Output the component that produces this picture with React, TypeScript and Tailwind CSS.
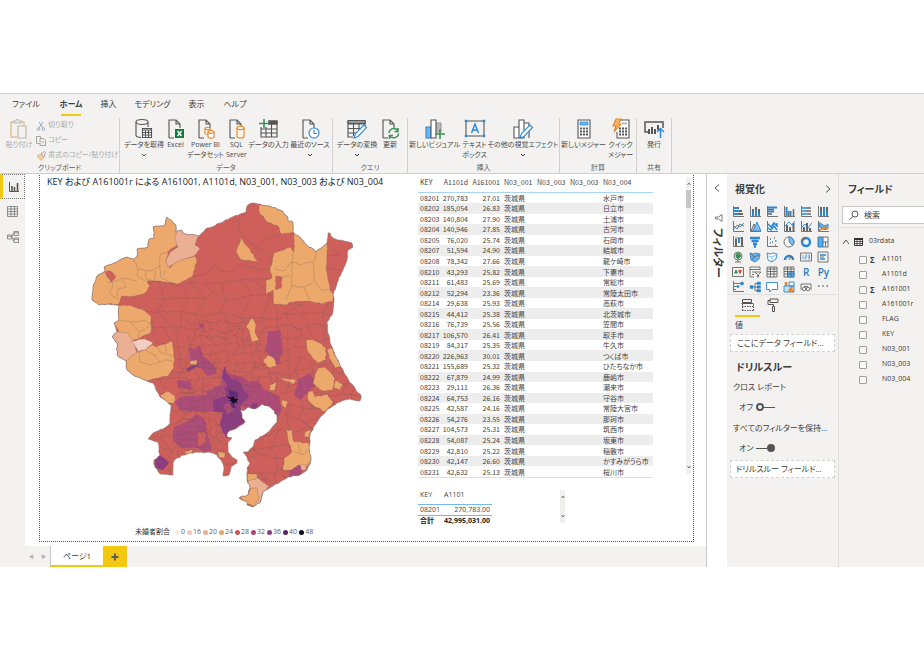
import type { ReactNode } from "react"

const FONT = "font-['Open_Sans','Noto_Sans_CJK_JP',sans-serif] [font-feature-settings:'palt']"

/* ---------- ribbon ---------- */

const INK = "#555"
const BLUE = "#2b88d8"
const GREEN = "#3a9155"
const ORANGE = "#e58326"

function Glyph({ children }: { children: ReactNode }) {
  return (
    <svg viewBox="0 0 22 22" className="size-[22px] shrink-0" fill="none" stroke={INK} strokeWidth="1.1" aria-hidden="true">
      {children}
    </svg>
  )
}

const page = <path d="M4 20V2h7l4 4v4M11 2v4h4M4 20h5" />

const glyphs: Record<string, ReactNode> = {
  paste: (
    <g stroke="#b9b5b0">
      <path d="M6 4H3v15h6M13 4h3v4" stroke="#dfc08c" strokeWidth="1.4" />
      <path d="M6 5V3h2c0-2 3-2 3 0h2v2zM10 8h8v12h-8z" fill="#f3f2f1" />
    </g>
  ),
  database: (
    <>
      <ellipse cx="9" cy="4" rx="6" ry="2.5" />
      <path d="M3 4v13c0 1.500 2 2.500 5 2.500M15 4v5" />
      <path d="M9.500 10.500h9v9h-9z" fill="#fff" />
      <path d="M9.500 12h9M9.500 14.500h9M9.500 17h9M12.500 12v7.500M15.500 12v7.500" />
    </>
  ),
  excel: (
    <>
      {page}
      <path d="M10 11h9v9h-9z" fill="#107c41" stroke="none" />
      <path d="M12.500 13l4 5M16.500 13l-4 5" stroke="#fff" strokeWidth="1.4" />
    </>
  ),
  dataset: (
    <>
      {page}
      <g stroke={ORANGE} fill="#fff">
        <path d="M10 10.500v5c0 1 4 1 5 0v-5" />
        <ellipse cx="12.5" cy="10.5" rx="2.5" ry="1.2" />
        <path d="M13 14v5c0 1.500 6 1.500 6 0v-5" />
        <ellipse cx="16" cy="14" rx="3" ry="1.4" />
      </g>
    </>
  ),
  sql: (
    <>
      {page}
      <g stroke={ORANGE} fill="#fdf3e8">
        <path d="M11 10v8.500c0 2 7 2 7 0V10" />
        <ellipse cx="14.5" cy="10" rx="3.5" ry="1.7" />
      </g>
    </>
  ),
  enter: (
    <>
      <path d="M10 3h9v16H3V9M10 6h9M3 11h16M3 15h16M8 9v10M13.500 6v13" />
      <path d="M11 3h8v3h-8z" fill={INK} />
      <path d="M6 1v9M1 5.500h10" stroke={GREEN} strokeWidth="1.6" />
    </>
  ),
  recent: (
    <>
      {page}
      <circle cx="15" cy="15" r="5" stroke={BLUE} fill="#fff" />
      <path d="M15 12v3.500h3" stroke={BLUE} />
    </>
  ),
  transform: (
    <>
      <path d="M2 3h17v5M2 3v16h5M2 6h17M2 10.500h14M2 15h8M7.500 6v12M13 6v7" />
      <path d="M2 2.500h17v3H2z" fill="#999" />
      <path d="M8 20l1.500-4.500L18 7l2.500 2.500L12 18.500z" stroke={BLUE} fill="#fff" />
    </>
  ),
  refresh: (
    <>
      {page}
      <path d="M10 15c.5-5 7-6 9-2M19 10v3.500h-3.500M19.500 15.500c-.5 5-7 5.500-9 2M10.500 21v-3.500H14" stroke={GREEN} strokeWidth="1.5" />
    </>
  ),
  visual: (
    <>
      <path d="M2 9h5v11H2z" fill="#6cb4ee" stroke={BLUE} />
      <path d="M12 5h5v9h-5z" fill="#bbb" stroke="#999" />
      <path d="M7 2h5v18H7z" fill="#fff" />
      <path d="M16 11v10M11 16h10" stroke={GREEN} strokeWidth="1.5" />
    </>
  ),
  textbox: (
    <>
      <path d="M2 3h18v15H2z" />
      <path d="M1 2h2v2H1zM19 2h2v2h-2zM1 17h2v2H1zM19 17h2v2h-2z" fill={BLUE} stroke={BLUE} strokeWidth=".5" />
      <path d="M7.500 15L11 6l3.500 9M8.700 12h4.600" stroke={BLUE} strokeWidth="1.4" />
    </>
  ),
  more: (
    <>
      <path d="M2 9h5v11H2zM7 2h5v18H7zM12 5h5v15" fill="#fff" />
      <path d="M8 20l1.500-4.500L18 7l2.500 2.500L12 18.500z" stroke={BLUE} fill="#fff" />
    </>
  ),
  calc: (
    <>
      <path d="M5 2h12v18H5z" fill="#fff" />
      <path d="M7 4h8v3H7z" fill="#6cb4ee" stroke={BLUE} strokeWidth=".8" />
      <path d="M7 10.500h8M7 13.500h8M7 16.500h8" strokeWidth="1.8" strokeDasharray="2 1" />
    </>
  ),
  quick: (
    <>
      <path d="M8 2h11v18H7v-6" fill="#fff" />
      <path d="M12 4.500h5v2h-5z" fill="#bbb" stroke="none" />
      <path d="M9 10.500h8M9 13.500h8M9 16.500h8" strokeWidth="1.8" strokeDasharray="2 1" />
      <path d="M6 1h5L8.500 6H11l-7 8 2-6H3z" fill="#f8b26a" stroke={ORANGE} />
    </>
  ),
  publish: (
    <>
      <path d="M5 14H2V4h18v6" strokeWidth="1.5" />
      <path d="M6 11v5M9 9v7M12 11v5M15 7v5" strokeWidth="2" />
      <path d="M17.500 20v-9M14 14l3.500-3.500L21 14" stroke={BLUE} strokeWidth="1.5" />
    </>
  ),
}

function Caret() {
  return (
    <svg viewBox="0 0 6 4" className="mt-[3px] h-[4px] w-[6px]" fill="none" stroke="#444" aria-hidden="true">
      <path d="M1 1l2 2 2-2" />
    </svg>
  )
}

interface Command {
  icon: string
  lines: string[]
  width: string
  menu?: boolean
  off?: boolean
}

function CommandButton({ icon, lines, width, menu, off }: Command) {
  return (
    <button
      disabled={off}
      className={`${width} flex shrink-0 flex-col items-center whitespace-nowrap text-[7px] leading-[10px] ${off ? "text-[#aaa8a6]" : "text-[#4b4a49]"}`}
    >
      <Glyph>{glyphs[icon]}</Glyph>
      {lines.map((line) => (
        <span key={line}>{line}</span>
      ))}
      {menu && <Caret />}
    </button>
  )
}

function Group({ name, width, children }: { name: string; width: string; children: ReactNode }) {
  return (
    <section aria-label={name} className={`${width} flex shrink-0 flex-col border-r border-[#d2d0ce]`}>
      <div className="flex flex-1 items-start">{children}</div>
      <div className="text-center text-[7px] leading-[10px] text-[#605e5c]">{name}</div>
    </section>
  )
}

const tabs = [
  { name: "ファイル", width: "w-[24px]" },
  { name: "ホーム", width: "w-[20px]" },
  { name: "挿入", width: "w-[17px]" },
  { name: "モデリング", width: "w-[33px]" },
  { name: "表示", width: "w-[17px]" },
  { name: "ヘルプ", width: "w-[22px]" },
]

function Ribbon() {
  return (
    <header className="border-y border-[#d2d0ce] bg-[#f3f2f1] text-[#3b3a39]">
      <nav className="flex h-[22px] gap-[19px] pl-[14px]">
        {tabs.map((tab) => (
          <button
            key={tab.name}
            className={`${tab.width} flex justify-center whitespace-nowrap border-b-2 pt-[4px] text-[8px] leading-[12px] first:mr-[4px] ${tab.name === "ホーム" ? "border-[#f2c811] font-bold" : "border-transparent"}`}
          >
            {tab.name}
          </button>
        ))}
      </nav>
      <div className="flex h-[57px] pt-[2px]">
        <Group name="クリップボード" width="w-[120px]">
          <div className="flex pl-[5px]">
            <CommandButton icon="paste" lines={["貼り付け"]} width="w-[28px]" off />
            <div className="flex flex-col pl-[3px] text-[7px] text-[#aaa8a6]">
              <button disabled className="flex h-[15px] items-center gap-[2px] whitespace-nowrap">
                <svg viewBox="0 0 10 10" className="size-[10px]" fill="none" stroke="#9bafc4" aria-hidden="true">
                  <path d="M3 1l4 6M7 1L3 7" />
                  <circle cx="2.5" cy="8" r="1.3" />
                  <circle cx="7.5" cy="8" r="1.3" />
                </svg>
                切り取り
              </button>
              <button disabled className="flex h-[15px] items-center gap-[2px] whitespace-nowrap">
                <svg viewBox="0 0 10 10" className="size-[10px]" fill="none" stroke="#a6a4a2" aria-hidden="true">
                  <path d="M3.500 7.500H.5v-7h4v2M4 2.500h3.500l2 2v5H4zM5.500 6h2.500" />
                </svg>
                コピー
              </button>
              <button disabled className="flex h-[15px] items-center gap-[2px] whitespace-nowrap">
                <svg viewBox="0 0 10 10" className="size-[10px]" fill="none" stroke="#a6a4a2" aria-hidden="true">
                  <path d="M1 5l4-2 3 3-3 3.500z" fill="#f2cfa4" stroke="#e0b37e" />
                  <path d="M5 3l3.500-2.500 1 1L8 6z" />
                </svg>
                書式のコピー/貼り付け
              </button>
            </div>
          </div>
        </Group>
        <Group name="データ" width="w-[213px]">
          <div className="flex pl-[3px]">
            <CommandButton icon="database" lines={["データを取得"]} width="w-[42px]" menu />
            <CommandButton icon="excel" lines={["Excel"]} width="w-[21px]" />
            <CommandButton icon="dataset" lines={["Power BI", "データセット"]} width="w-[39px]" />
            <CommandButton icon="sql" lines={["SQL", "Server"]} width="w-[23px]" />
            <CommandButton icon="enter" lines={["データの入力"]} width="w-[41px]" />
            <CommandButton icon="recent" lines={["最近のソース"]} width="w-[42px]" menu />
          </div>
        </Group>
        <Group name="クエリ" width="w-[75px]">
          <div className="flex pl-[1px]">
            <CommandButton icon="transform" lines={["データの変換"]} width="w-[46px]" menu />
            <CommandButton icon="refresh" lines={["更新"]} width="w-[20px]" />
          </div>
        </Group>
        <Group name="挿入" width="w-[152px]">
          <div className="flex">
            <CommandButton icon="visual" lines={["新しいビジュアル"]} width="w-[53px]" />
            <CommandButton icon="textbox" lines={["テキスト", "ボックス"]} width="w-[27px]" />
            <CommandButton icon="more" lines={["その他の視覚エフェクト"]} width="w-[70px]" menu />
          </div>
        </Group>
        <Group name="計算" width="w-[77px]">
          <div className="flex">
            <CommandButton icon="calc" lines={["新しいメジャー"]} width="w-[47px]" />
            <CommandButton icon="quick" lines={["クイック", "メジャー"]} width="w-[27px]" />
          </div>
        </Group>
        <Group name="共有" width="w-[35px]">
          <CommandButton icon="publish" lines={["発行"]} width="w-[34px]" />
        </Group>
      </div>
    </header>
  )
}

/* ---------- map ---------- */

type Point = [number, number]

const RED = "#cf5f5b"
const AMBER = "#eda96c"
const PINK = "#ebaf93"
const PALE = "#f2cdc1"
const MAUVE = "#ae4b77"
const PURPLE = "#8d3c82"

const coast =
  "104,267 112,264 127,257 134,259 137,256 137,249 148,247 149,239 154,238 153,227 164,226 167,217 176,225 176,231 182,230 183,233 199,236 207,228 223,222 230,218 246,212 247,206 252,203 260,204 270,206 280,210 288,217 288,221 293,222 293,232 300,237 307,245 316,252 327,243 328,233 330,233 333,238 352,243 353,247 348,250 346,263 343,270 337,283 333,295 334,301 333,312 327,322 328,333 331,345 335,355 341,367 347,377 357,392 361,395 360,401 350,399 340,402 328,409 317,422 310,435 309,447 311,460 307,470 300,475 288,477 273,486 263,492 260,503 253,507 247,505 247,502 239,498 240,497 248,495 250,488 247,480 247,468 250,463 247,457 243,452 247,452 253,447 255,440 267,433 277,422 277,415 270,407 262,404 255,409 248,407 243,411 241,409 242,418 245,422 237,428 228,432 227,437 232,438 228,442 228,452 232,457 237,460 237,463 231,467 229,475 223,476 224,468 222,462 217,455 208,452 190,453 177,458 173,463 173,475 160,474 155,467 154,460 160,455 158,442 148,439 153,433 163,429 170,423 171,405 160,397 153,383 147,381 133,375 127,370 126,361 117,355 117,343 112,337 117,332 114,323 119,320 119,305 108,304 99,305 92,300 93,287 98,275 105,271"

const urban: [string, string][] = [
  [MAUVE, "268,332 280,330 283,350 278,365 272,362 266,350"],
  [MAUVE, "298,380 310,373 316,384 310,390 300,400 294,395"],
  [MAUVE, "288,478 290,470 296,462 301,468 303,475"],
  [MAUVE, "174,427 188,421 197,414 206,422 208,437 212,450 205,452 197,448 180,447 173,440"],
  [RED, "198,432 205,432 206,442 198,446"],
  [MAUVE, "175,402 180,397 213,394 216,412 200,412 180,410"],
  [MAUVE, "177,381 190,381 192,390 178,388"],
  [MAUVE, "189,347 194,350 199,345 203,356 215,366 217,374 208,376 200,368 190,364"],
  [MAUVE, "222,370 232,375 240,376 250,382 258,380 264,390 280,396 281,412 276,420 272,408 262,406 255,411 240,406 215,402 206,396 206,391 222,385"],
  [PURPLE, "213,400 226,396 224,388 228,386 222,378 224,366 230,378 240,382 244,390 249,397 243,402 240,406 243,412 246,421 232,430 232,438 226,438 220,426 223,412 214,412"],
  [MAUVE, "223,405 231,402 234,410 227,415"],
  [PURPLE, "186,369 195,364 198,366 188,372"],
  [PURPLE, "154,457 160,455 169,463 163,470 156,468"],
  [PURPLE, "252,404 258,403 256,411 251,410"],
  ["#5f2a72", "228,389 237,392 238,398 230,398"],
  ["#5f2a72", "230,402 234,402 236,408 232,408"],
  [MAUVE, "199,324 203,323 204,327 200,329"],
]

const rural: [string, string][] = [
  [AMBER, "104,267 112,264 127,257 134,259 137,256 137,249 148,247 149,239 154,238 153,227 164,226 167,217 176,225 176,231 177,245 168,252 166,262 170,268 175,262 185,258 195,256 197,260 192,277 186,280 177,284 160,281 147,281 150,286 145,293 135,296 122,296 119,304 108,304 99,305 92,300 93,287 98,275 105,271"],
  [PINK, "176,231 182,230 183,233 199,236 195,245 200,249 194,256 176,262 168,268 166,260 170,252 178,247 175,240"],
  [RED, "105,272 110,271 116,277 111,282 107,277"],
  [AMBER, "119,305 130,305 145,311 151,316 151,332 140,338 132,341 119,332 114,323 119,320"],
  [PINK, "117,332 128,333 134,342 137,352 128,361 126,361 117,355 117,343 112,337"],
  [PALE, "132,341 145,339 153,343 145,350 138,352 134,344"],
  [AMBER, "137,352 145,350 153,345 156,347 165,344 172,341 174,352 174,368 168,376 153,379 147,381 133,375 127,370 126,361"],
  [AMBER, "160,395 168,391 175,396 174,403 166,402"],
  [AMBER, "260,204 270,206 280,210 288,217 288,221 293,222 293,232 281,234 279,227 266,221 259,212"],
  [AMBER, "294,232 300,237 307,245 316,252 327,243 327,255 326,268 330,290 333,294 333,301 322,304 310,301 290,302 286,305 274,304 273,290 266,294 266,280 272,278 270,268 274,253 284,250 290,247 294,252"],
  [RED, "276,276 282,277 281,288 276,290"],
  [AMBER, "241,238 248,247 258,262 242,260 236,252 238,246"],
  [AMBER, "252,318 256,325 255,332 259,340 252,342 249,330 246,327"],
  [AMBER, "268,355 274,358 277,366 270,368 263,362"],
  [AMBER, "306,340 314,340 326,348 326,360 318,363 308,352"],
  [AMBER, "327,350 332,348 341,367 335,368 329,358"],
  [AMBER, "318,368 325,367 335,378 333,390 323,391 313,383"],
  [AMBER, "335,380 343,384 340,390 334,388"],
  [AMBER, "308,392 313,391 315,397 327,394 333,402 325,412 312,404 308,400"],
  [AMBER, "280,377 296,380 294,384 283,380"],
  [AMBER, "270,385 276,382 275,390 269,390"],
  [AMBER, "282,400 288,402 286,408 282,405"],
  [AMBER, "286,430 292,430 294,442 309,443 311,460 306,467 298,465 292,470 283,470 284,458 292,452 288,440"],
  [AMBER, "305,432 311,430 309,437 304,436"],
  [PINK, "300,465 306,465 306,470 301,470"],
  [AMBER, "247,473 257,474 258,479 248,481"],
  [PINK, "248,481 258,478 269,486 262,494 259,504 252,507 258,498 256,490 250,488"],
  [AMBER, "240,497 248,495 250,489 257,488 259,500 253,506 247,504"],
  [AMBER, "190,361 197,360 196,365 190,364"],
  [AMBER, "185,451 193,450 191,454 186,454"],
  [AMBER, "218,452 225,453 224,458 219,458"],
]

// municipal borders too large for the generated mesh
const borders = [
  "134,259 138,269 150,271 160,266 160,255 168,252",
  "138,269 137,276 145,281",
  "145,271 146,279 155,281 155,271",
  "160,266 161,278 174,284",
  "163,276 166,270",
  "107,282 113,282 122,278 137,281",
  "113,282 110,294 119,300",
  "122,278 126,287 118,289 117,297",
  "119,320 132,322 145,320 151,325",
  "130,322 139,332 150,326",
  "139,332 138,338",
  "139,352 140,362 150,365 160,362 155,355 145,350",
  "156,347 160,352 172,356",
  "165,344 166,353",
  "160,362 168,360 174,362",
  "274,268 283,271 292,262 294,252",
  "292,262 302,265 315,260 316,252",
  "292,262 292,285 286,300",
  "313,262 314,280 321,290 330,290",
  "292,286 304,287 313,282",
  "304,287 310,300",
  "282,277 290,275",
  "294,451 303,455 310,448",
  "298,442 301,452",
  "247,206 246,212 239,219 238,231 247,240 257,246",
  "257,246 266,252 272,262",
  "257,246 268,238 281,234",
  "248,240 262,255",
  "192,277 205,275 215,264 220,272 232,271 243,265 262,270 270,268",
  "327,255 340,256 346,263",
  "328,243 340,256",
  "326,268 343,270",
]

function noise(x: number, y: number) {
  const v = Math.sin(x * 12.9898 + y * 78.233) * 43758.5453
  return v - Math.floor(v)
}

// breaks every segment into short steps, so that a border looks surveyed
function roughen(points: Point[], amount = 1.4) {
  const out: Point[] = [points[0]]
  for (let i = 1; i < points.length; i++) {
    const [ax, ay] = points[i - 1]
    const [bx, by] = points[i]
    const length = Math.hypot(bx - ax, by - ay)
    const steps = Math.max(1, Math.round(length / 3))
    for (let s = 1; s < steps; s++) {
      const x = ax + ((bx - ax) * s) / steps
      const y = ay + ((by - ay) * s) / steps
      out.push([x + (noise(x, y) - 0.5) * amount, y + (noise(y, x) - 0.5) * amount])
    }
    out.push([bx, by])
  }
  return out
}

const toPath = (points: Point[]) => "M" + points.map(([x, y]) => `${x.toFixed(1)} ${y.toFixed(1)}`).join("L")

const parse = (text: string) => text.split(" ").map((pair) => pair.split(",").map(Number) as Point)

const area = (text: string) => {
  const points = parse(text)
  return toPath(roughen([...points, points[0]])) + "Z"
}

function mesh(x0: number, y0: number, x1: number, y1: number, size: number) {
  const at = (i: number, j: number): Point => [
    x0 + (i + (j % 2) / 2 + (noise(i + x0, j + y0) - 0.5) * 0.8) * size,
    y0 + (j + (noise(j + y0, i + x0) - 0.5) * 0.8) * size,
  ]
  let d = ""
  for (let j = 0; j * size <= y1 - y0; j++) {
    for (let i = 0; i * size <= x1 - x0; i++) {
      d += toPath(roughen([at(i, j), at(i + 1, j)], 2))
      if (noise(i * 3, j * 7) > 0.15) d += toPath(roughen([at(i, j), at(i, j + 1)], 2))
    }
  }
  return d
}

const meshes = [
  mesh(145, 282, 355, 325, 16),
  mesh(150, 330, 185, 475, 13),
  mesh(185, 322, 262, 392, 8),
  mesh(180, 392, 250, 450, 7),
  mesh(264, 328, 360, 412, 11),
  mesh(245, 418, 312, 485, 13),
  mesh(220, 452, 236, 476, 11),
]

function RegionMap() {
  return (
    <svg viewBox="80 195 290 320" className="ml-[40px] h-[320px] w-[290px]" role="img" aria-label="未婚者割合">
      <defs>
        <clipPath id="land">
          <path d={area(coast)} />
        </clipPath>
      </defs>
      <path d={area(coast)} fill={RED} />
      <g clipPath="url(#land)" stroke="#6c5f5a" strokeOpacity=".55" strokeWidth=".5" strokeLinejoin="round">
        {urban.map(([fill, points]) => (
          <path key={points} d={area(points)} fill={fill} stroke="none" />
        ))}
        {meshes.map((d) => (
          <path key={d.slice(0, 24)} d={d} fill="none" />
        ))}
        {rural.map(([fill, points]) => (
          <path key={points} d={area(points)} fill={fill} />
        ))}
        {borders.map((points) => (
          <path key={points} d={toPath(roughen(parse(points)))} fill="none" />
        ))}
      </g>
      <path d="M226 396l5 1.500 3-1 .5 2 4 .5-2 2 1 2-3-.5-1 1.500-1.500-2.500-3-1 2-1z" fill="#140a20" />
      <path d={area(coast)} fill="none" stroke="#8a7a74" strokeWidth=".6" />
    </svg>
  )
}

const legend = [
  { value: "0", dot: "bg-[#f8ebe9]" },
  { value: "16", dot: "bg-[#f0c8bb]" },
  { value: "20", dot: "bg-[#ebaf93]" },
  { value: "24", dot: "bg-[#eda360]" },
  { value: "28", dot: "bg-[#cf5551]" },
  { value: "32", dot: "bg-[#ae4270]" },
  { value: "36", dot: "bg-[#8d3c82]" },
  { value: "40", dot: "bg-[#56246c]" },
  { value: "48", dot: "bg-[#140a20]" },
]

/* ---------- tables ---------- */

const cities = [
  ["08201", "270,783", "27.01", "水戸市"],
  ["08202", "185,054", "26.83", "日立市"],
  ["08203", "140,804", "27.90", "土浦市"],
  ["08204", "140,946", "27.85", "古河市"],
  ["08205", "76,020", "25.74", "石岡市"],
  ["08207", "51,594", "24.90", "結城市"],
  ["08208", "78,342", "27.66", "龍ケ崎市"],
  ["08210", "43,293", "25.82", "下妻市"],
  ["08211", "61,483", "25.69", "常総市"],
  ["08212", "52,294", "23.36", "常陸太田市"],
  ["08214", "29,638", "25.93", "高萩市"],
  ["08215", "44,412", "25.38", "北茨城市"],
  ["08216", "76,739", "25.56", "笠間市"],
  ["08217", "106,570", "26.41", "取手市"],
  ["08219", "84,317", "25.35", "牛久市"],
  ["08220", "226,963", "30.01", "つくば市"],
  ["08221", "155,689", "25.32", "ひたちなか市"],
  ["08222", "67,879", "24.99", "鹿嶋市"],
  ["08223", "29,111", "26.36", "潮来市"],
  ["08224", "64,753", "26.16", "守谷市"],
  ["08225", "42,587", "24.16", "常陸大宮市"],
  ["08226", "54,276", "23.55", "那珂市"],
  ["08227", "104,573", "25.31", "筑西市"],
  ["08228", "54,087", "25.24", "坂東市"],
  ["08229", "42,810", "25.22", "稲敷市"],
  ["08230", "42,147", "26.60", "かすみがうら市"],
  ["08231", "42,632", "25.13", "桜川市"],
]

function ScrollBar({ height, thumb }: { height: string; thumb?: boolean }) {
  return (
    <div className={`${height} flex w-[5px] flex-col items-center bg-[#f1f0ef] py-[3px]`}>
      <svg viewBox="0 0 4 8" className="h-[8px] w-[4px]" fill="none" stroke="#555" strokeWidth=".8" aria-hidden="true">
        <path d="M.5 5L2 3l1.500 2" />
      </svg>
      {thumb && <div className="mt-[2px] h-[18px] w-full bg-[#c8c6c4]" />}
      <svg viewBox="0 0 4 8" className="mt-auto h-[8px] w-[4px]" fill="none" stroke="#555" strokeWidth=".8" aria-hidden="true">
        <path d="M.5 3L2 5l1.500-2" />
      </svg>
    </div>
  )
}

function CityTable() {
  return (
    <table className="h-[301px] w-[235px] table-fixed border-b border-[#e1dfdd] text-left font-['Noto_Sans_CJK_JP',sans-serif] text-[7px] leading-[10px] whitespace-nowrap text-[#444]">
      <colgroup>
        <col className="w-[22px]" />
        <col className="w-[30px]" />
        <col className="w-[32px]" />
        <col className="w-[33px]" />
        <col className="w-[33px]" />
        <col className="w-[33px]" />
        <col className="w-[52px]" />
      </colgroup>
      <thead>
        <tr className="h-[15px] border-b border-[#a9d5f2] align-top">
          {["KEY", "A1101d", "A161001", "N03_001", "N03_003", "N03_003", "N03_004"].map((name, i) => (
            <th key={i} className={`px-[2px] py-0 font-normal ${i === 1 || i === 2 ? "text-right" : ""}`}>
              {name}
            </th>
          ))}
        </tr>
      </thead>
      <tbody>
        {cities.map(([key, people, rate, city]) => (
          <tr key={key} className="even:bg-[#ededed]">
            <td className="px-[2px] py-0">{key}</td>
            <td className="px-[2px] py-0 text-right">{people}</td>
            <td className="px-[2px] py-0 text-right">{rate}</td>
            <td className="px-[2px] py-0">茨城県</td>
            <td />
            <td />
            <td className="px-[2px] py-0">{city}</td>
          </tr>
        ))}
      </tbody>
    </table>
  )
}

function TotalTable() {
  return (
    <table className="w-[74px] table-fixed text-left text-[7px] leading-[10px] whitespace-nowrap text-[#444]">
      <colgroup>
        <col className="w-[24px]" />
        <col className="w-[50px]" />
      </colgroup>
      <thead>
        <tr className="h-[14px] border-b border-[#74baee] align-top">
          <th className="px-[2px] py-0 font-normal">KEY</th>
          <th className="px-[2px] py-0 font-normal">A1101</th>
        </tr>
      </thead>
      <tbody>
        <tr className="h-[11px] border-b border-[#74baee]">
          <td className="px-[2px] py-0">08201</td>
          <td className="px-[2px] py-0 text-right">270,783.00</td>
        </tr>
      </tbody>
      <tfoot>
        <tr className="h-[11px] font-bold text-[#222]">
          <td className="px-[2px] py-0">合計</td>
          <td className="px-[2px] py-0 text-right">42,995,031.00</td>
        </tr>
      </tfoot>
    </table>
  )
}

/* ---------- side panes ---------- */

const axes = <path d="M1.500 0v10.500H12" />

const visuals: { name: string; art: ReactNode }[] = [
  { name: "積み上げ横棒", art: <>{axes}<path d="M2 2h4M2 5h6M2 8h5" stroke={BLUE} strokeWidth="2" /><path d="M6 2h1M8 5h2M6 8h5" strokeWidth="2" /></> },
  { name: "積み上げ縦棒", art: <>{axes}<path d="M4 10V6M7 10V4M10 10V7" stroke={BLUE} strokeWidth="2" /><path d="M4 6V3M7 4V1M10 7V3" strokeWidth="2" /></> },
  { name: "集合横棒", art: <>{axes}<path d="M2 1.500h9M2 5.500h6" stroke={BLUE} strokeWidth="2" /><path d="M2 3.500h6M2 8h4" strokeWidth="1.5" /></> },
  { name: "集合縦棒", art: <>{axes}<path d="M3.500 10V1M7.500 10V5" stroke={BLUE} strokeWidth="2" /><path d="M5.500 10V5M10.500 10V3" strokeWidth="1.5" /></> },
  { name: "100% 横棒", art: <>{axes}<path d="M2 2h5M2 5h3M2 8h6" stroke={BLUE} strokeWidth="1.5" /><path d="M7 2h4M5 5h6M8 8h3" strokeWidth="1.5" /></> },
  { name: "100% 縦棒", art: <>{axes}<path d="M4 10V5M7 10V2M10 10V6" stroke={BLUE} strokeWidth="2" /><path d="M4 5V1M7 2V1M10 6V1" strokeWidth="2" /></> },
  { name: "折れ線", art: <>{axes}<path d="M2 8l3-4 3 2 4-4" stroke={BLUE} /><path d="M2 5l3 3 3-5 4 2" /></> },
  { name: "面", art: <>{axes}<path d="M2 10l3-7 3 7z" fill="#ccc" /><path d="M4 10l4-9 4 9z" fill="#7dbcf0" stroke={BLUE} /></> },
  { name: "積み上げ面", art: <>{axes}<path d="M2 3l3 3 3-4 3 3V2M2 7l3 2 3-4 3 4" stroke={BLUE} strokeWidth="1.5" /></> },
  { name: "折れ線と積み上げ", art: <>{axes}<path d="M4 10V4M7 10V6M10.500 10V2" strokeWidth="2" /><path d="M7 10V8M10.500 10V7M2 5l4-4 3 3 3-4" stroke={BLUE} /></> },
  { name: "折れ線と集合", art: <>{axes}<path d="M4 10V6M7 10V2M10 10V7" strokeWidth="2" /><path d="M2 6l3-3 3 4 4-5" stroke={BLUE} /></> },
  { name: "リボン", art: <>{axes}<path d="M2 2c4 0 4 5 9 1v4c-5 4-5-1-9-1z" fill="#5caeea" stroke={BLUE} /><path d="M2 9c3 0 5-5 9-1" stroke={ORANGE} strokeWidth="2" /></> },
  { name: "ウォーターフォール", art: <>{axes}<path d="M4 10V3M10 10V1" strokeWidth="2" /><path d="M7 7V2" stroke={BLUE} strokeWidth="2" /><path d="M3 2h8" /></> },
  { name: "じょうご", art: <path d="M1 2h10M2.500 5h7M4 8h4M5 10.500h2" stroke={BLUE} strokeWidth="2.6" /> },
  { name: "散布図", art: <>{axes}<path d="M4 3h1M8 2h1M6 6h1" strokeWidth="1.5" /><path d="M4 7h1M9 5h1.500M9 9h1" stroke={BLUE} strokeWidth="1.5" /></> },
  { name: "円", art: <><circle cx="6" cy="6" r="5" fill="#fff" /><path d="M6 1a5 5 0 013.500 8.500L6 6z" fill="#7dbcf0" stroke={BLUE} /></> },
  { name: "ドーナツ", art: <><circle cx="6" cy="6" r="4" stroke={BLUE} strokeWidth="2.5" /><path d="M6 2a4 4 0 00-4 3" stroke="#777" strokeWidth="2.5" /></> },
  { name: "ツリーマップ", art: <><path d="M1 1h10v10H1zM6 1v10M6 6h5M8.500 6v5" /><path d="M1.500 1.500h4v9h-4z" fill="#5caeea" stroke={BLUE} /></> },
  { name: "マップ", art: <><circle cx="6" cy="5" r="4" /><path d="M4 3l3-1 2 3-3 3-2-2z" fill={GREEN} stroke={GREEN} /><path d="M3 11h6M6 9v2" /></> },
  { name: "塗り分け地図", art: <><path d="M1 2l3 1 3-1 4 1-1 5-4 3-4-2z" fill="#6cb4ee" stroke={BLUE} /><path d="M2 2l3 4 5-2M5 6l-2 3" /></> },
  { name: "図形マップ", art: <><path d="M1 2l3 1 3-1 4 1-1 5-4 3-4-2z" fill="#fff" stroke={BLUE} /><path d="M2 5l4 1 4-2M6 6v4" stroke="#7dbcf0" /></> },
  { name: "ゲージ", art: <><path d="M2 9a4 4 0 018 0" stroke={BLUE} strokeWidth="2.5" /><path d="M6 9l2-4M7.500 4.500A4 4 0 0110 9" /></> },
  { name: "カード", art: <><path d="M.5 2h11v8H.5z" /><path d="M3 4v4M5 4h1.500v2H5v2h1.500M8 4h1.500v4H8M8 6h1.500" stroke={BLUE} strokeWidth=".7" /></> },
  { name: "複数の行カード", art: <><path d="M1 1h10v10H1z" /><path d="M3 4h6M3 8h5" stroke={BLUE} strokeWidth="1.5" /><path d="M3 6h4" /></> },
  { name: "KPI", art: <><path d="M.5 1.500h11v9H.5z" /><path d="M2.500 7l1.500-3 1.500 3z" fill={GREEN} stroke={GREEN} /><path d="M6.500 4.500L8 7.500l1.500-3z" fill="#d64550" stroke="#d64550" /></> },
  { name: "スライサー", art: <><path d="M5 11H1V1h10v3M1 3.500h10M3 6h3M3 8.500h2" /><path d="M6 6h6L9.500 8.500V11h-1V8.500z" fill="#fff" /></> },
  { name: "テーブル", art: <path d="M1 1h10v10H1zM1 3h10M1 5.500h10M1 8h10M4.500 1v10M8 1v10" /> },
  { name: "マトリックス", art: <><path d="M1 1h10v10H1z" /><path d="M4.500 5.500H11V11H4.500z" fill="#5caeea" stroke={BLUE} /><path d="M1 3h10M1 5.500h10M1 8h10M4.500 1v10M8 1v10" /></> },
  { name: "R", art: null },
  { name: "Py", art: null },
  { name: "主要なインフルエンサー", art: <>{axes}<path d="M2 2.500h7M2 5.500h4M2 8.500h2" /><circle cx="10" cy="2.5" r="1.5" fill={BLUE} stroke={BLUE} /><circle cx="6" cy="5.5" r="1" fill={BLUE} stroke={BLUE} /></> },
  { name: "分解ツリー", art: <><path d="M4 6h4M6 2.500v7M6 2.500h2M6 9.500h2" /><path d="M1 4.500h3v3H1zM8 1h3.500v2.500H8zM8 4.800h3.500v2.500H8zM8 8.500h3.500V11H8z" fill={BLUE} stroke={BLUE} strokeWidth=".5" /></> },
  { name: "Q&A", art: <path d="M.5 1.500h11v7H6L3.500 11V8.500h-3z" stroke={BLUE} fill="#fff" /> },
  { name: "ArcGIS", art: <><path d="M1 5h10v6H1z" fill="#bfe0f7" stroke={BLUE} /><path d="M6 1h5v4H6z" stroke={BLUE} /><path d="M3 1v4M6 11l3-5" stroke={ORANGE} strokeWidth="2.5" /><path d="M9.500 9v2.500" stroke={ORANGE} strokeWidth="2" /></> },
  { name: "カスタム", art: <><path d="M1 9V3h10v6" /><circle cx="4" cy="8" r="1.8" /><circle cx="8" cy="8" r="1.8" /><path d="M4 5.500h4" /></> },
  { name: "その他", art: <path d="M1 5h1.500M5.300 5h1.500M9.500 5H11" strokeWidth="1.5" /> },
]

function VisualPane() {
  return (
    <aside className="flex w-[112px] shrink-0 flex-col border-r border-[#e1dfdd] bg-[#f3f2f1] text-[#3b3a39]">
      <div className="flex h-[30px] items-center justify-between pr-[7px] pl-[8px]">
        <h2 className="text-[10px] font-bold">視覚化</h2>
        <svg viewBox="0 0 6 8" className="h-[8px] w-[6px]" fill="none" stroke="#555" aria-hidden="true">
          <path d="M1 .5L5 4 1 7.500" />
        </svg>
      </div>
      <div className="grid grid-cols-6 pr-[6px] pl-[2px]">
        {visuals.map(({ name, art }) => (
          <button key={name} aria-label={name} className="flex h-[15px] items-center justify-center text-[10px] leading-[12px] font-semibold text-[#2b7cc0]">
            {art ? (
              <svg viewBox="0 0 12 12" className="size-[12px]" fill="none" stroke="#666" strokeWidth=".9" aria-hidden="true">
                {art}
              </svg>
            ) : (
              name
            )}
          </button>
        ))}
      </div>
      <div className="flex gap-[1px] border-t border-[#e1dfdd] pl-[8px]">
        <button aria-label="フィールド" className="flex h-[22px] w-[25px] justify-center border-b-2 border-[#f2c811] pt-[3px]">
          <svg viewBox="0 0 14 14" className="size-[14px]" fill="none" stroke="#555" aria-hidden="true">
            <path d="M1.500 1.500h9v3h-9zM.5 5.500h12" />
            <path d="M1 8.500h12M1 12.500h12M1.500 6v7M12.500 6v7" strokeDasharray="1.5 1" />
          </svg>
        </button>
        <button aria-label="書式" className="flex h-[20px] w-[25px] justify-center pt-[3px]">
          <svg viewBox="0 0 14 14" className="size-[14px]" fill="none" stroke="#555" aria-hidden="true">
            <path d="M3 1h8v3.500H3zM3 2.500H1v4h5.500v2M5.500 8.500h2v5h-2z" />
          </svg>
        </button>
      </div>
      <div className="px-[6px] text-[8px]">
        <div className="pt-[1px] pl-[2px] leading-[14px]">値</div>
        <div className="-mx-[3px] mt-[2px] border border-dashed border-[#d2d0ce] bg-white pl-[6px] leading-[16px] whitespace-nowrap">ここにデータ フィールド...</div>
        <h3 className="pt-[6px] pl-[3px] text-[10px] leading-[18px] font-bold">ドリルスルー</h3>
        <div className="pt-[3px] leading-[16px]">クロス レポート</div>
        <label className="mt-[4px] flex h-[16px] items-center gap-[3px] pl-[6px]">
          オフ
          <Toggle />
        </label>
        <div className="pt-[4px] leading-[18px] whitespace-nowrap">すべてのフィルターを保持...</div>
        <label className="mt-[3px] flex h-[16px] items-center gap-[3px] pl-[6px]">
          オン
          <Toggle on />
        </label>
        <div className="-mx-[3px] mt-[4px] border border-dashed border-[#d2d0ce] bg-white pl-[5px] leading-[16px] whitespace-nowrap">ドリルスルー フィールド...</div>
      </div>
    </aside>
  )
}

function Toggle({ on = false }: { on?: boolean }) {
  return (
    <input
      type="checkbox"
      role="switch"
      defaultChecked={on}
      className="flex h-[8px] w-[19px] appearance-none items-center before:size-[8px] before:rounded-full before:border-2 before:border-[#555] after:h-px after:flex-1 after:bg-[#555] checked:flex-row-reverse checked:before:bg-[#555]"
    />
  )
}

const fields = ["A1101", "A1101d", "A161001", "A161001r", "FLAG", "KEY", "N03_001", "N03_003", "N03_004"]

function FieldPane() {
  return (
    <aside className="w-[85px] shrink-0 overflow-hidden bg-[#f3f2f1] text-[#3b3a39]">
      <h2 className="pl-[9px] text-[10px] leading-[30px] font-bold">フィールド</h2>
      <div className="border-b border-[#e1dfdd] pt-[2px] pb-[3px] pl-[3px]">
        <label className="flex h-[18px] items-center gap-[5px] border border-r-0 border-[#c8c6c4] bg-white pl-[6px]">
          <svg viewBox="0 0 10 10" className="size-[10px] shrink-0" fill="none" stroke="#555" aria-hidden="true">
            <circle cx="6" cy="4" r="3" />
            <path d="M4 6.500L.5 9.500" />
          </svg>
          <input aria-label="検索" placeholder="検索" className="w-full min-w-0 text-[8px] outline-none placeholder:text-[#3b3a39]" />
        </label>
      </div>
      <button className="mt-[6px] flex h-[15px] items-center pl-[3px] text-[7px]">
        <svg viewBox="0 0 8 6" className="mr-[4px] h-[6px] w-[8px]" fill="none" stroke="#555" aria-hidden="true">
          <path d="M1 5l3-4 3 4" />
        </svg>
        <svg viewBox="0 0 9 8" className="mr-[6px] h-[8px] w-[9px]" fill="none" stroke="#333" aria-hidden="true">
          <path d="M.5.500h8v7h-8z" fill="#fff" />
          <path d="M0 1h9" strokeWidth="2" />
          <path d="M0 3.500h9M0 5.500h9M3 1v7M6 1v7" strokeWidth=".8" />
        </svg>
        03rdata
      </button>
      <ul className="pt-[3px] text-[7px]">
        {fields.map((name) => (
          <li key={name}>
            <label className="flex h-[15px] items-center pl-[20px]">
              <input type="checkbox" className="size-[8px] appearance-none rounded-[1px] border border-[#a19f9d] bg-[#f9f8f7] checked:bg-[#555]" />
              <span className="w-[15px] pl-[3px] text-[8px] font-bold">{name === "A1101" || name === "A161001" ? "Σ" : ""}</span>
              {name}
            </label>
          </li>
        ))}
      </ul>
    </aside>
  )
}

function ViewRail() {
  return (
    <nav className="flex w-[25px] shrink-0 flex-col bg-[#f3f2f1]">
      <button aria-label="レポート" className="flex h-[25px] items-center justify-center border border-l-[3px] border-dotted border-[#777] border-l-[#f2c811] [border-left-style:solid]">
        <svg viewBox="0 0 10 10" className="size-[10px]" fill="none" stroke="#555" aria-hidden="true">
          <path d="M.5 0v9.500H10" />
          <path d="M3 9V4M5.500 9V5M8.500 9V1" strokeWidth="1.6" />
        </svg>
      </button>
      <button aria-label="データ" className="flex h-[25px] items-center justify-center">
        <svg viewBox="0 0 11 11" className="size-[11px]" fill="none" stroke="#777" strokeWidth=".8" aria-hidden="true">
          <path d="M.5.500h10v10H.5zM.5 3h10M.5 5.500h10M.5 8h10M4 .5v10M7.500.500v10" />
        </svg>
      </button>
      <button aria-label="モデル" className="flex h-[25px] items-center justify-center">
        <svg viewBox="0 0 12 12" className="size-[12px]" fill="none" stroke="#777" strokeWidth=".8" aria-hidden="true">
          <path d="M.5 4h4v4h-4zM.5 5.300h4M7 .5h4.500v4H7zM7 1.800h4.500M7 7h4.500v4.500H7zM7 8.300h4.500M4.500 5H6V2.500h1M4.500 7H6v2.500h1" />
        </svg>
      </button>
    </nav>
  )
}

function PageTabs() {
  return (
    <footer className="flex h-[21px] bg-[#f3f2f1]">
      <div className="flex w-[25px] items-center justify-around text-[5px] text-[#b3b0ad]">
        <button aria-label="前のページ">◀</button>
        <button aria-label="次のページ">▶</button>
      </div>
      <button className="w-[53px] border-b-2 border-l border-b-[#f2c811] border-l-[#c8c6c4] bg-white text-[8px] text-[#3b3a39]">ページ1</button>
      <button aria-label="新しいページ" className="flex w-[24px] items-center justify-center bg-[#f2c811]">
        <svg viewBox="0 0 8 8" className="size-[8px]" stroke="#605e5c" strokeWidth="2" aria-hidden="true">
          <path d="M4 .5v7M.5 4h7" />
        </svg>
      </button>
    </footer>
  )
}

export default function App() {
  return (
    <div className={`${FONT} min-h-screen bg-white pt-[93px]`}>
      <Ribbon />
      <div className="flex">
        <ViewRail />
        <div className="flex min-w-0 flex-1 flex-col">
          <main className="mt-px mr-[12px] mb-[4px] ml-[14px] flex flex-1 border border-t-0 border-dotted border-[#555]">
            <section className="min-w-0 flex-1">
              <h1 className="pt-[1px] pl-[7px] text-[9px] leading-[12px] font-normal whitespace-nowrap text-[#222]">
                KEY および A161001r による A161001, A1101d, N03_001, N03_003 および N03_004
              </h1>
              <div className="pt-[7px]">
                <RegionMap />
              </div>
              <div className="flex items-center gap-[2px] pt-[12px] pl-[95px] text-[7px] leading-[10px] whitespace-nowrap text-[#605e5c]">
                <span className="mr-[3px] text-[#333]">未婚者割合</span>
                {legend.map(({ value, dot }) => (
                  <span key={value} className="flex items-center gap-px">
                    <i className={`${dot} size-[5px] rounded-full`} />
                    {value}
                  </span>
                ))}
              </div>
            </section>
            <section className="w-[275px] shrink-0">
              <div className="flex items-start justify-between pt-[2px] pr-[2px]">
                <CityTable />
                <ScrollBar height="h-[297px]" thumb />
              </div>
              <div className="flex items-start gap-[68px] pt-[12px] pb-[15px]">
                <TotalTable />
                <ScrollBar height="h-[33px]" />
              </div>
            </section>
          </main>
          <PageTabs />
        </div>
        <aside className="flex w-[21px] shrink-0 flex-col items-center border-l border-[#c8c6c4] pt-[10px]">
          <button aria-label="展開">
            <svg viewBox="0 0 6 8" className="h-[8px] w-[6px]" fill="none" stroke="#555" aria-hidden="true">
              <path d="M5 .5L1 4l4 3.500" />
            </svg>
          </button>
          <svg viewBox="0 0 8 8" className="mt-[22px] ml-[3px] size-[8px]" fill="none" stroke="#777" aria-hidden="true">
            <path d="M7 .5v7L3.500 5H.5V3h3z" />
          </svg>
          <h2 className="mt-[6px] ml-[2px] text-[11px] leading-[14px] font-bold text-[#3b3a39] [writing-mode:vertical-rl]">
            <span className="[text-orientation:sideways]">フィルター</span>
          </h2>
        </aside>
        <VisualPane />
        <FieldPane />
      </div>
    </div>
  )
}
